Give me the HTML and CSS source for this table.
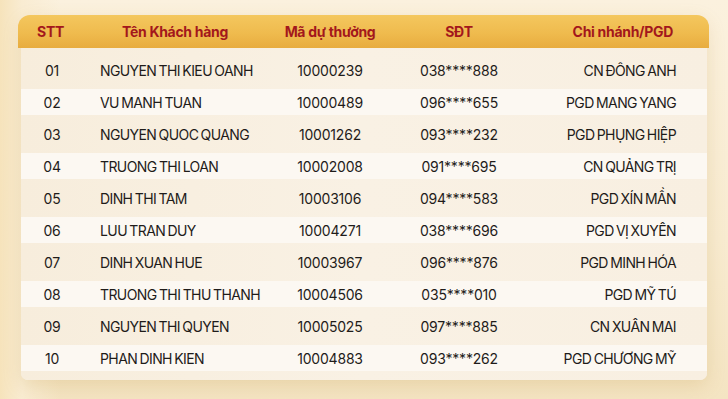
FILE: index.html
```html
<!DOCTYPE html>
<html lang="vi">
<head>
<meta charset="utf-8">
<link rel="stylesheet" href="styles.css">
</head>
<body>
<div class="page">
  <div class="card">
    <div class="head">
      <div class="c1">STT</div>
      <div class="c2">Tên Khách hàng</div>
      <div class="c3">Mã dự thưởng</div>
      <div class="c4">SĐT</div>
      <div class="c5">Chi nhánh/PGD</div>
    </div>
    <div class="body">
      <div class="row"><div class="c1">01</div><div class="c2">NGUYEN THI KIEU OANH</div><div class="c3">10000239</div><div class="c4">038****888</div><div class="c5">CN ĐÔNG ANH</div></div>
      <div class="row alt"><div class="c1">02</div><div class="c2">VU MANH TUAN</div><div class="c3">10000489</div><div class="c4">096****655</div><div class="c5">PGD MANG YANG</div></div>
      <div class="row"><div class="c1">03</div><div class="c2">NGUYEN QUOC QUANG</div><div class="c3">10001262</div><div class="c4">093****232</div><div class="c5">PGD PHỤNG HIỆP</div></div>
      <div class="row alt"><div class="c1">04</div><div class="c2">TRUONG THI LOAN</div><div class="c3">10002008</div><div class="c4">091****695</div><div class="c5">CN QUẢNG TRỊ</div></div>
      <div class="row"><div class="c1">05</div><div class="c2">DINH THI TAM</div><div class="c3">10003106</div><div class="c4">094****583</div><div class="c5">PGD XÍN MẦN</div></div>
      <div class="row alt"><div class="c1">06</div><div class="c2">LUU TRAN DUY</div><div class="c3">10004271</div><div class="c4">038****696</div><div class="c5">PGD VỊ XUYÊN</div></div>
      <div class="row"><div class="c1">07</div><div class="c2">DINH XUAN HUE</div><div class="c3">10003967</div><div class="c4">096****876</div><div class="c5">PGD MINH HÓA</div></div>
      <div class="row alt"><div class="c1">08</div><div class="c2">TRUONG THI THU THANH</div><div class="c3">10004506</div><div class="c4">035****010</div><div class="c5">PGD MỸ TÚ</div></div>
      <div class="row"><div class="c1">09</div><div class="c2">NGUYEN THI QUYEN</div><div class="c3">10005025</div><div class="c4">097****885</div><div class="c5">CN XUÂN MAI</div></div>
      <div class="row alt"><div class="c1">10</div><div class="c2">PHAN DINH KIEN</div><div class="c3">10004883</div><div class="c4">093****262</div><div class="c5">PGD CHƯƠNG MỸ</div></div>
    </div>
  </div>
</div>
</body>
</html>
```

FILE: styles.css
```css
* { box-sizing: border-box; }
html, body { margin: 0; padding: 0; }
body {
  width: 728px;
  height: 399px;
  overflow: hidden;
  font-family: Inter, "Noto Sans", sans-serif;
  background:
    linear-gradient(90deg, #f6e3bb 0px, #f9ecd2 22px, rgba(249,236,210,0) 60px),
    linear-gradient(180deg, #fbf1de 0%, #f8ebd0 60%, #f4e4c2 100%);
}
.page {
  padding: 15px 21px 0 21px;
}
.card {
  width: 686px;
  border-radius: 12px 12px 7px 7px;
  background: #f8f0e2;
  box-shadow: 0 6px 18px rgba(190, 150, 70, 0.22);
}
.head {
  display: grid;
  grid-template-columns: 65px 184px 126px 132px 184px;
  margin: 0 -2px 0 -3px;
  height: 33px;
  align-items: center;
  border-radius: 12px 12px 0 0;
  background: linear-gradient(180deg, #f4c75e 0%, #efbb4e 55%, #e8ac3f 100%);
  color: #a3171c;
  font-weight: 700;
  font-size: 14px;
  letter-spacing: -0.3px;
}
.head .c1, .head .c2, .head .c3, .head .c4 { text-align: center; }
.head .c5 { text-align: right; padding-right: 36px; }
.body {
  padding: 6px 0 6px 0;
  background: linear-gradient(90deg, #f7eddc, #f9f1e4 50%, #f8efe1);
  border-radius: 0 0 7px 7px;
}
.row {
  display: grid;
  grid-template-columns: 62px 184px 126px 132px 182px;
  height: 32px;
  align-items: center;
  font-size: 14px;
  color: #1f1c1a;
  letter-spacing: -0.2px;
}
.row.alt {
  height: 26px;
  margin: 3px 0;
  background: #fcf8f2;
}
.row .c1 { text-align: center; }
.row .c2 { padding-left: 17px; white-space: nowrap; letter-spacing: -0.6px; word-spacing: -1px; }
.row .c3, .row .c4 { text-align: center; }
.row .c5 { text-align: right; padding-right: 31px; white-space: nowrap; letter-spacing: -0.6px; word-spacing: -1px; }
```
